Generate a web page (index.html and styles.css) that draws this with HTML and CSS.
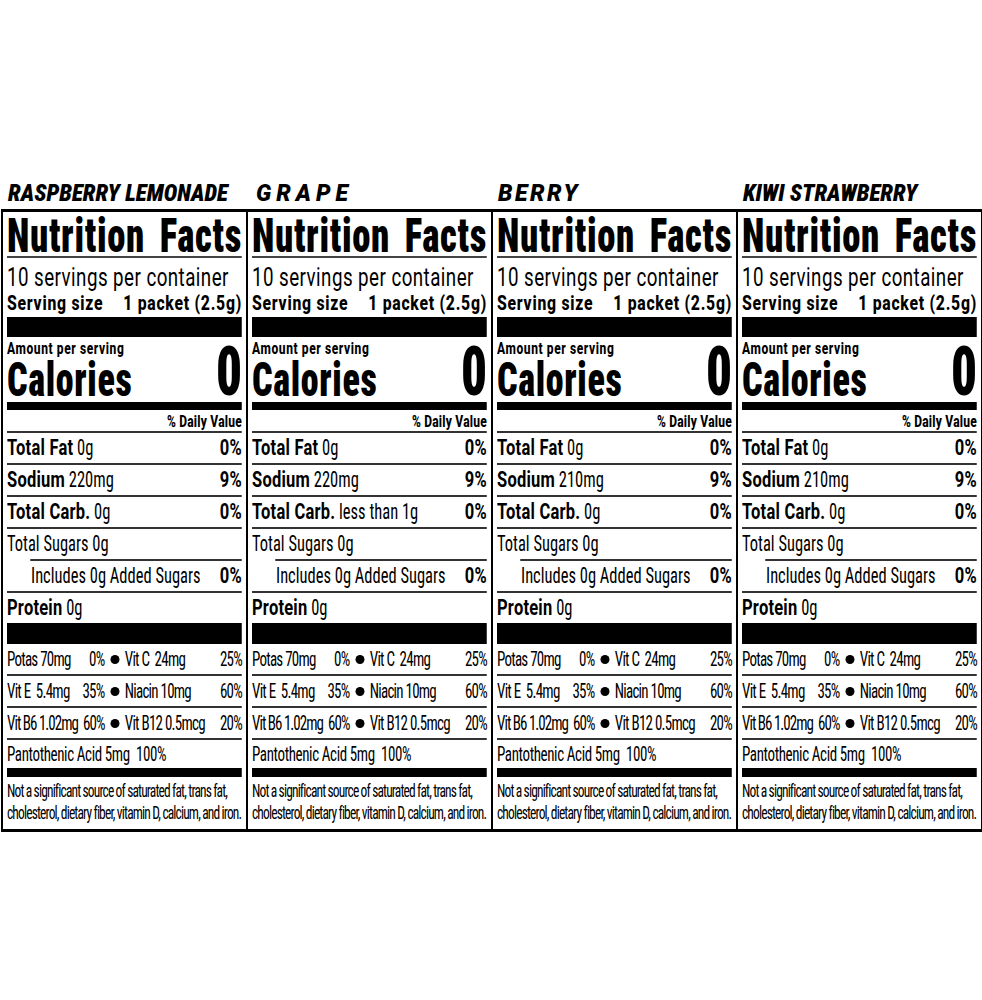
FILE: index.html
```html
<!DOCTYPE html>
<html lang="en">
<head>
<meta charset="utf-8">
<title>Nutrition Facts</title>
<link rel="stylesheet" href="styles.css">
</head>
<body>
<main class="labels">

  <section class="col">
    <h2 class="flavor">RASPBERRY LEMONADE</h2>
    <div class="panel">
      <div class="inner">
        <div class="nf-head"><span>Nutrition</span><span>Facts</span></div>
        <div class="servings">10 servings per container</div>
        <div class="size"><span>Serving size</span><span>1 packet (2.5g)</span></div>
        <div class="bar bar-thick"></div>
        <div class="cal">
          <div class="cal-left"><div class="amount">Amount per serving</div><div class="cal-label">Calories</div></div>
          <div class="cal-num">0</div>
        </div>
        <div class="bar bar-mid"></div>
        <div class="dv">% Daily Value</div>
        <div class="row"><span><b>Total Fat</b> 0g</span><b>0%</b></div>
        <div class="row"><span><b>Sodium</b> 220mg</span><b>9%</b></div>
        <div class="row"><span><b>Total Carb.</b> 0g</span><b>0%</b></div>
        <div class="row row-open"><span>Total Sugars 0g</span></div>
        <div class="rule-indent"></div>
        <div class="row row-sub"><span>Includes 0g Added Sugars</span><b>0%</b></div>
        <div class="row row-open"><span><b>Protein</b> 0g</span></div>
        <div class="bar bar-thick2"></div>
        <div class="vrow"><span class="vl"><span>Potas 70mg</span><span>0%</span></span><span class="dot"></span><span class="vr"><span>Vit C&nbsp; 24mg</span><span>25%</span></span></div>
        <div class="vrow"><span class="vl"><span>Vit E&nbsp; 5.4mg</span><span>35%</span></span><span class="dot"></span><span class="vr"><span>Niacin 10mg</span><span>60%</span></span></div>
        <div class="vrow"><span class="vl vl-tight"><span>Vit B6 1.02mg</span><span>60%</span></span><span class="dot"></span><span class="vr"><span>Vit B12 0.5mcg</span><span>20%</span></span></div>
        <div class="vrow vrow-last">Pantothenic Acid 5mg&nbsp; 100%</div>
        <div class="bar bar-mid2"></div>
        <div class="foot"><div>Not a significant source of saturated fat, trans fat,</div><div>cholesterol, dietary fiber, vitamin D, calcium, and iron.</div></div>
      </div>
    </div>
  </section>

  <section class="col">
    <h2 class="flavor flavor-grape">GRAPE</h2>
    <div class="panel">
      <div class="inner">
        <div class="nf-head"><span>Nutrition</span><span>Facts</span></div>
        <div class="servings">10 servings per container</div>
        <div class="size"><span>Serving size</span><span>1 packet (2.5g)</span></div>
        <div class="bar bar-thick"></div>
        <div class="cal">
          <div class="cal-left"><div class="amount">Amount per serving</div><div class="cal-label">Calories</div></div>
          <div class="cal-num">0</div>
        </div>
        <div class="bar bar-mid"></div>
        <div class="dv">% Daily Value</div>
        <div class="row"><span><b>Total Fat</b> 0g</span><b>0%</b></div>
        <div class="row"><span><b>Sodium</b> 220mg</span><b>9%</b></div>
        <div class="row"><span><b>Total Carb.</b> less than 1g</span><b>0%</b></div>
        <div class="row row-open"><span>Total Sugars 0g</span></div>
        <div class="rule-indent"></div>
        <div class="row row-sub"><span>Includes 0g Added Sugars</span><b>0%</b></div>
        <div class="row row-open"><span><b>Protein</b> 0g</span></div>
        <div class="bar bar-thick2"></div>
        <div class="vrow"><span class="vl"><span>Potas 70mg</span><span>0%</span></span><span class="dot"></span><span class="vr"><span>Vit C&nbsp; 24mg</span><span>25%</span></span></div>
        <div class="vrow"><span class="vl"><span>Vit E&nbsp; 5.4mg</span><span>35%</span></span><span class="dot"></span><span class="vr"><span>Niacin 10mg</span><span>60%</span></span></div>
        <div class="vrow"><span class="vl vl-tight"><span>Vit B6 1.02mg</span><span>60%</span></span><span class="dot"></span><span class="vr"><span>Vit B12 0.5mcg</span><span>20%</span></span></div>
        <div class="vrow vrow-last">Pantothenic Acid 5mg&nbsp; 100%</div>
        <div class="bar bar-mid2"></div>
        <div class="foot"><div>Not a significant source of saturated fat, trans fat,</div><div>cholesterol, dietary fiber, vitamin D, calcium, and iron.</div></div>
      </div>
    </div>
  </section>

  <section class="col">
    <h2 class="flavor flavor-berry">BERRY</h2>
    <div class="panel">
      <div class="inner">
        <div class="nf-head"><span>Nutrition</span><span>Facts</span></div>
        <div class="servings">10 servings per container</div>
        <div class="size"><span>Serving size</span><span>1 packet (2.5g)</span></div>
        <div class="bar bar-thick"></div>
        <div class="cal">
          <div class="cal-left"><div class="amount">Amount per serving</div><div class="cal-label">Calories</div></div>
          <div class="cal-num">0</div>
        </div>
        <div class="bar bar-mid"></div>
        <div class="dv">% Daily Value</div>
        <div class="row"><span><b>Total Fat</b> 0g</span><b>0%</b></div>
        <div class="row"><span><b>Sodium</b> 210mg</span><b>9%</b></div>
        <div class="row"><span><b>Total Carb.</b> 0g</span><b>0%</b></div>
        <div class="row row-open"><span>Total Sugars 0g</span></div>
        <div class="rule-indent"></div>
        <div class="row row-sub"><span>Includes 0g Added Sugars</span><b>0%</b></div>
        <div class="row row-open"><span><b>Protein</b> 0g</span></div>
        <div class="bar bar-thick2"></div>
        <div class="vrow"><span class="vl"><span>Potas 70mg</span><span>0%</span></span><span class="dot"></span><span class="vr"><span>Vit C&nbsp; 24mg</span><span>25%</span></span></div>
        <div class="vrow"><span class="vl"><span>Vit E&nbsp; 5.4mg</span><span>35%</span></span><span class="dot"></span><span class="vr"><span>Niacin 10mg</span><span>60%</span></span></div>
        <div class="vrow"><span class="vl vl-tight"><span>Vit B6 1.02mg</span><span>60%</span></span><span class="dot"></span><span class="vr"><span>Vit B12 0.5mcg</span><span>20%</span></span></div>
        <div class="vrow vrow-last">Pantothenic Acid 5mg&nbsp; 100%</div>
        <div class="bar bar-mid2"></div>
        <div class="foot"><div>Not a significant source of saturated fat, trans fat,</div><div>cholesterol, dietary fiber, vitamin D, calcium, and iron.</div></div>
      </div>
    </div>
  </section>

  <section class="col">
    <h2 class="flavor">KIWI STRAWBERRY</h2>
    <div class="panel">
      <div class="inner">
        <div class="nf-head"><span>Nutrition</span><span>Facts</span></div>
        <div class="servings">10 servings per container</div>
        <div class="size"><span>Serving size</span><span>1 packet (2.5g)</span></div>
        <div class="bar bar-thick"></div>
        <div class="cal">
          <div class="cal-left"><div class="amount">Amount per serving</div><div class="cal-label">Calories</div></div>
          <div class="cal-num">0</div>
        </div>
        <div class="bar bar-mid"></div>
        <div class="dv">% Daily Value</div>
        <div class="row"><span><b>Total Fat</b> 0g</span><b>0%</b></div>
        <div class="row"><span><b>Sodium</b> 210mg</span><b>9%</b></div>
        <div class="row"><span><b>Total Carb.</b> 0g</span><b>0%</b></div>
        <div class="row row-open"><span>Total Sugars 0g</span></div>
        <div class="rule-indent"></div>
        <div class="row row-sub"><span>Includes 0g Added Sugars</span><b>0%</b></div>
        <div class="row row-open"><span><b>Protein</b> 0g</span></div>
        <div class="bar bar-thick2"></div>
        <div class="vrow"><span class="vl"><span>Potas 70mg</span><span>0%</span></span><span class="dot"></span><span class="vr"><span>Vit C&nbsp; 24mg</span><span>25%</span></span></div>
        <div class="vrow"><span class="vl"><span>Vit E&nbsp; 5.4mg</span><span>35%</span></span><span class="dot"></span><span class="vr"><span>Niacin 10mg</span><span>60%</span></span></div>
        <div class="vrow"><span class="vl vl-tight"><span>Vit B6 1.02mg</span><span>60%</span></span><span class="dot"></span><span class="vr"><span>Vit B12 0.5mcg</span><span>20%</span></span></div>
        <div class="vrow vrow-last">Pantothenic Acid 5mg&nbsp; 100%</div>
        <div class="bar bar-mid2"></div>
        <div class="foot"><div>Not a significant source of saturated fat, trans fat,</div><div>cholesterol, dietary fiber, vitamin D, calcium, and iron.</div></div>
      </div>
    </div>
  </section>

</main>
</body>
</html>
```
FILE: styles.css
```css
html, body {
  margin: 0;
  background: #fff;
  color: #000;
}
body {
  font-family: Roboto, "Liberation Sans", sans-serif;
}
.labels {
  display: grid;
  grid-template-columns: 245px 245px 245px 247px;
  padding: 180px 0 0 1px;
}
.flavor {
  margin: 0;
  height: 26px;
  padding: 3px 0 0 7px;
  font-family: Roboto, "Liberation Sans", sans-serif;
  font-style: italic;
  font-weight: 900;
  font-size: 23px;
  line-height: 22px;
  font-stretch: 82%;
  white-space: nowrap;
}
.flavor-grape { padding-left: 10px; font-stretch: 100%; letter-spacing: 5px; }
.flavor-berry { font-stretch: 100%; letter-spacing: 2.5px; }

.panel {
  border-top: 3px solid #000;
  border-bottom: 3px solid #000;
  border-left: 2px solid #000;
  padding-left: 4px;
}
.col:last-child .panel { border-right: 2px solid #000; }

.inner {
  width: 313.33px;
  transform: scaleX(0.75);
  transform-origin: 0 0;
}

.nf-head {
  display: flex;
  justify-content: space-between;
  height: 41px;
  padding-top: 3px;
  font-size: 49px;
  line-height: 41px;
  font-weight: 900;
  font-stretch: 87%;
  letter-spacing: 0.9px;
  border-bottom: 2px solid #444;
}
.servings {
  height: 29px;
  padding-top: 5px;
  font-size: 25px;
  line-height: 29px;
  letter-spacing: 0.6px;
}
.size {
  display: flex;
  justify-content: space-between;
  height: 22px;
  font-size: 21px;
  line-height: 22px;
  font-weight: 800;
  letter-spacing: 1px;
}
.bar { background: #000; }
.bar-thick { height: 20px; margin-top: 3px; }
.bar-mid { height: 8px; }
.bar-thick2 { height: 21px; }
.bar-mid2 { height: 9px; }

.cal {
  display: flex;
  justify-content: space-between;
  align-items: flex-end;
  height: 65px;
}
.amount {
  padding-top: 4px;
  font-size: 16px;
  line-height: 16px;
  font-weight: 800;
  letter-spacing: 0.8px;
}
.cal-label {
  font-size: 48px;
  line-height: 45px;
  font-weight: 900;
  font-stretch: 86%;
  letter-spacing: 0.9px;
}
.cal-num {
  font-size: 68px;
  line-height: 60px;
  font-weight: 900;
  font-stretch: 80%;
}
.dv {
  text-align: right;
  padding-top: 2px;
  font-size: 16px;
  line-height: 19px;
  font-weight: 800;
  letter-spacing: 0.3px;
  border-bottom: 2px solid #333;
}
.row {
  display: flex;
  justify-content: space-between;
  height: 30px;
  font-size: 22px;
  line-height: 30px;
  font-stretch: 87%;
  border-bottom: 2px solid #333;
}
.row b {
  font-weight: 700;
  font-stretch: 100%;
  letter-spacing: 0.3px;
}
.row-open { border-bottom: none; }
.rule-indent {
  height: 2px;
  background: #333;
  margin-left: 31px;
}
.row-sub { padding-left: 32px; }

.vrow {
  display: flex;
  align-items: center;
  height: 30px;
  font-size: 20px;
  line-height: 30px;
  font-stretch: 75%;
  letter-spacing: -1px;
  border-bottom: 2px solid #333;
  white-space: nowrap;
}
.vl {
  width: 130px;
  display: flex;
  justify-content: space-between;
}
.vl-tight { letter-spacing: -1.3px; }
.dot {
  width: 27px;
  display: flex;
  justify-content: center;
}
.dot::before {
  content: "";
  width: 12px;
  height: 9px;
  border-radius: 50%;
  background: #000;
}
.vr {
  flex: 1;
  display: flex;
  justify-content: space-between;
}
.vrow-last {
  height: 28px;
  line-height: 28px;
  border-bottom: none;
  letter-spacing: -0.5px;
}
.foot {
  padding: 3px 0 5px;
  font-size: 18px;
  line-height: 22px;
  font-stretch: 75%;
  letter-spacing: -1.15px;
  white-space: nowrap;
}
```
